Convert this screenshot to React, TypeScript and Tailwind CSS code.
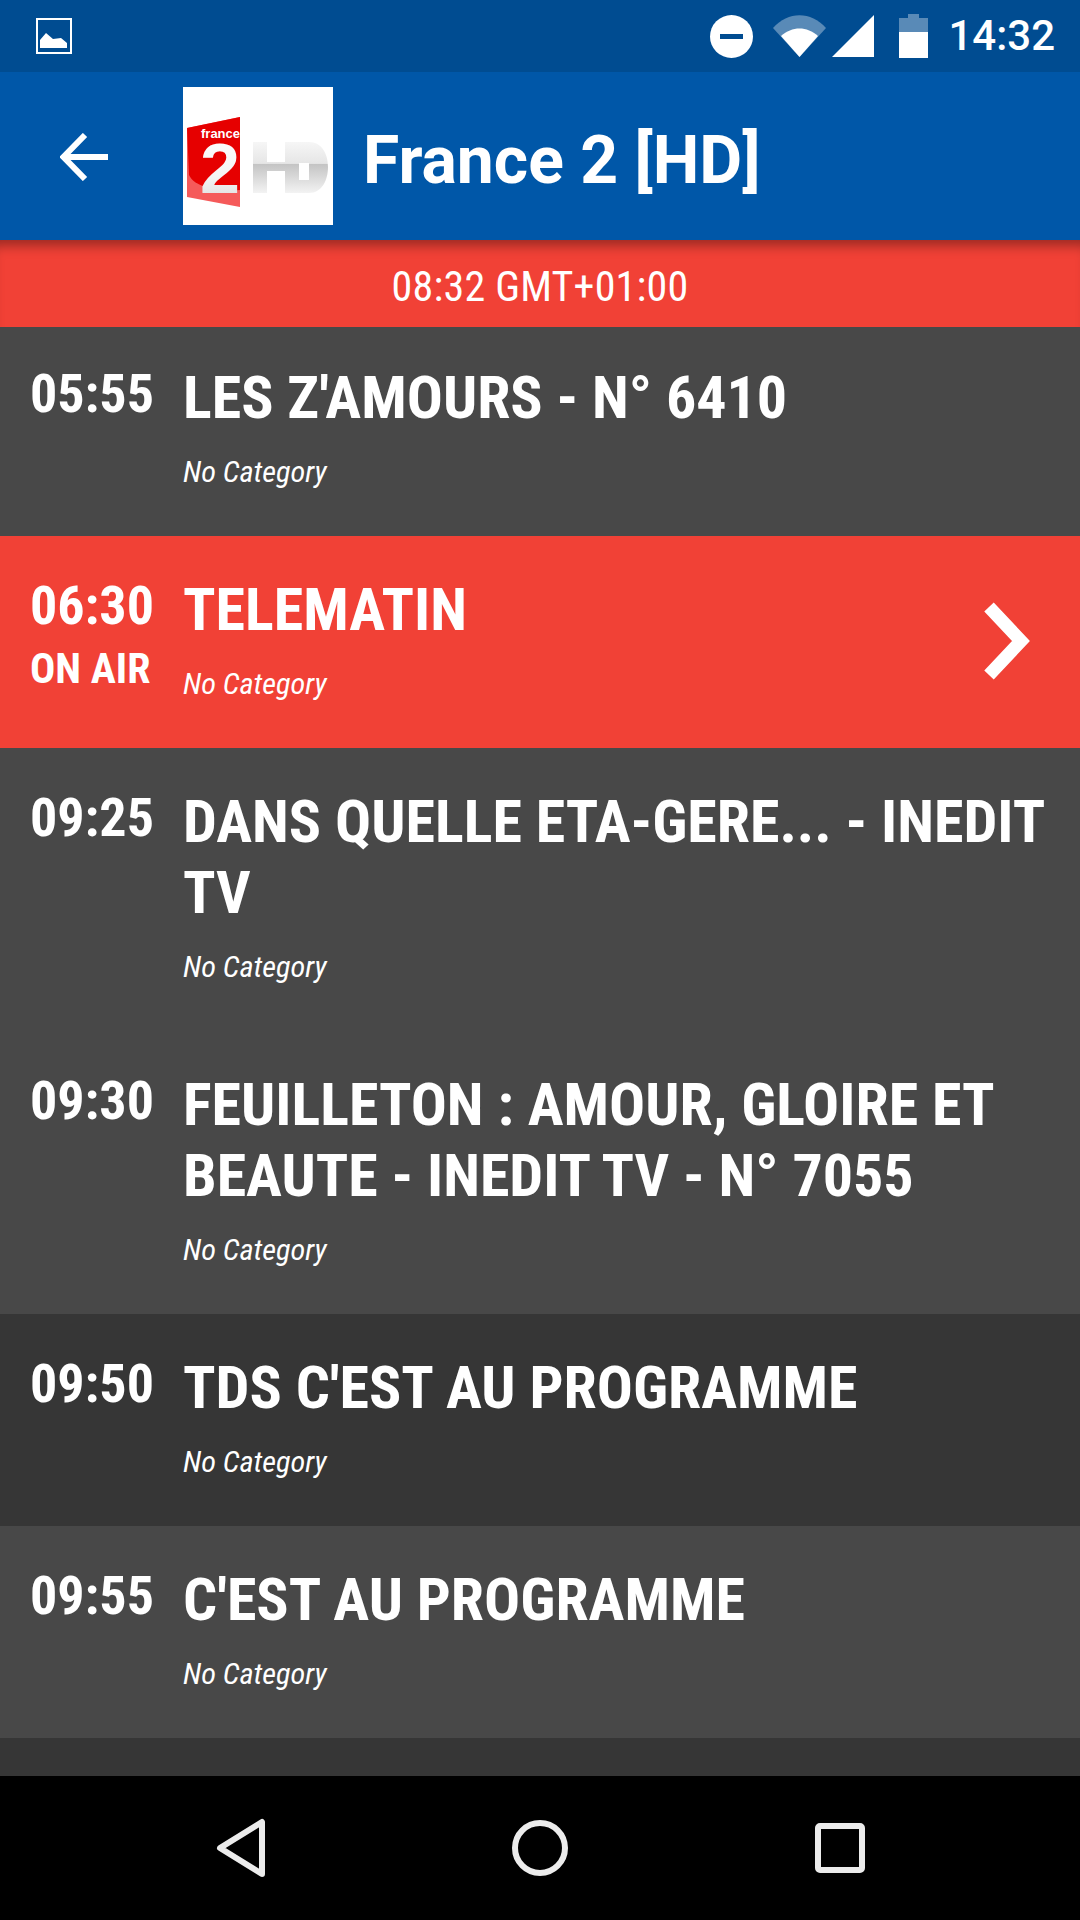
interface Program {
    time: string;
    title: string[];
    bg: string;
    onAir?: boolean;
}

const programs: Program[] = [
    { time: '05:55', title: ["LES Z'AMOURS - N° 6410"], bg: 'bg-[#484848] h-[209px] pt-[35px]' },
    { time: '06:30', title: ['TELEMATIN'], bg: 'bg-[#f14136] h-[212px] pt-[38px]', onAir: true },
    { time: '09:25', title: ['DANS QUELLE ETA-GERE... - INEDIT', 'TV'], bg: 'bg-[#484848] h-[283px] pt-[38px]' },
    { time: '09:30', title: ['FEUILLETON : AMOUR, GLOIRE ET', 'BEAUTE - INEDIT TV - N° 7055'], bg: 'bg-[#484848] h-[283px] pt-[38px]' },
    { time: '09:50', title: ["TDS C'EST AU PROGRAMME"], bg: 'bg-[#363636] h-[212px] pt-[38px]' },
    { time: '09:55', title: ["C'EST AU PROGRAMME"], bg: 'bg-[#484848] h-[212px] pt-[38px]' },
];

function StatusBar() {
    return (
        <div className="h-[72px] bg-[#004c91] flex items-center justify-between pl-[36px] pr-[25px] [font-stretch:100%]">
            <svg width="36" height="36" viewBox="0 0 36 36" className="-mt-[1px]">
                <rect x="1" y="1" width="34" height="34" fill="none" stroke="#fff" strokeWidth="2" />
                <path d="M4 30V22L10 15L17 21L25 20L31 25V30z" fill="#fff" />
            </svg>
            <div className="flex items-center">
                <svg width="43" height="43" viewBox="0 0 43 43" className="mr-[20px]">
                    <circle cx="21.5" cy="21.5" r="21.5" fill="#fff" />
                    <rect x="10" y="19" width="23" height="5" fill="#004c91" />
                </svg>
                <svg width="53" height="42" viewBox="0 0 53 42" className="mr-[6px]">
                    <path d="M0 13C15 -4 38 -4 53 13L26.5 42z" fill="#fff" fillOpacity="0.35" />
                    <path d="M8 21C19 11 34 11 45 21L26.5 42z" fill="#fff" />
                </svg>
                <svg width="42" height="42" viewBox="0 0 42 42" className="mr-[25px]">
                    <path d="M42 0V42H0z" fill="#fff" />
                </svg>
                <svg width="29" height="44" viewBox="0 0 29 44" className="mr-[20px]">
                    <path d="M9 0h11v4h9v14H0V4h9z" fill="#fff" fillOpacity="0.35" />
                    <path d="M0 18h29v26H0z" fill="#fff" />
                </svg>
                <span className="text-[42px] leading-none text-white font-medium">14:32</span>
            </div>
        </div>
    );
}

function Logo() {
    return (
        <div className="w-[150px] h-[138px] bg-white shrink-0">
            <svg width="150" height="138" viewBox="0 0 150 138">
                <defs>
                    <linearGradient id="hd" x1="0" y1="0" x2="0" y2="1">
                        <stop offset="0" stopColor="#f6f6f6" />
                        <stop offset="0.42" stopColor="#e6e6e6" />
                        <stop offset="0.44" stopColor="#c4c4c4" />
                        <stop offset="1" stopColor="#f3f3f3" />
                    </linearGradient>
                    <linearGradient id="two" x1="0" y1="0" x2="0" y2="1">
                        <stop offset="0" stopColor="#ffffff" />
                        <stop offset="0.6" stopColor="#f4f4f4" />
                        <stop offset="1" stopColor="#d8d8d8" />
                    </linearGradient>
                </defs>
                <path d="M4 41L57 30V120L4 110z" fill="#f55a5a" />
                <path d="M4 41L57 30V103C35 104 12 101 6 88z" fill="#e60000" />
                <text x="18" y="51" fontSize="13" fontWeight="700" fill="#fff" fontFamily="Liberation Sans, sans-serif">france</text>
                <text x="17" y="106" fontSize="71" fontWeight="700" fill="url(#two)" fontFamily="Liberation Sans, sans-serif" textLength="40" lengthAdjust="spacingAndGlyphs">2</text>
                <path d="M70 55h14v20h18V55h24c13 0 19 12 19 25s-6 26-19 26h-24V84H84v22H70z" fill="url(#hd)" />
                <rect x="116" y="76" width="10" height="17" fill="#ffffff" />
            </svg>
        </div>
    );
}

function Row({ program }: { program: Program }) {
    return (
        <div className={`relative flex pl-[30px] ${program.bg}`}>
            <div className="w-[153px] shrink-0 pt-[8px]">
                <div className="text-[54px] leading-[48px] font-[750] text-white">{program.time}</div>
                {program.onAir && <div className="text-[42px] leading-[46px] mt-[16px] font-[750] text-white">ON AIR</div>}
            </div>
            <div className="min-w-0">
                {program.title.map((line) => (
                    <div key={line} className="text-[60px] leading-[71px] font-[750] text-white whitespace-nowrap">{line}</div>
                ))}
                <div className="text-[30.3px] leading-[36px] italic text-white mt-[21px]">No Category</div>
            </div>
            {program.onAir && (
                <svg width="47" height="72" viewBox="0 0 47 72" className="absolute left-[983px] top-[69px] overflow-visible">
                    <path d="M6 2L38 36L6 70" fill="none" stroke="#fff" strokeWidth="13" />
                </svg>
            )}
        </div>
    );
}

export default function App() {
    return (
        <div className="relative w-[1080px] h-[1920px] overflow-hidden flex flex-col bg-[#363636] font-['Roboto',sans-serif] [font-stretch:75%]">
            <StatusBar />
            <div className="relative z-10 h-[168px] bg-[#0057a8] flex items-center [font-stretch:100%]">
                <svg width="48" height="48" viewBox="0 0 48 48" className="ml-[60px] shrink-0 mt-[1px]">
                    <path d="M48 24H5M25 2L3.500 24L25 46" fill="none" stroke="#fff" strokeWidth="6" />
                </svg>
                <div className="ml-[75px]"><Logo /></div>
                <h1 className="ml-[30px] mt-[9px] text-[66px] font-bold text-white leading-none">France 2 [HD]</h1>
            </div>
            <div className="h-[87px] pt-[5px] bg-[#f14136] flex items-center justify-center text-[42px] text-white tracking-[0.2px] shadow-[inset_0_14px_12px_-8px_rgba(0,0,0,0.35)]">08:32 GMT+01:00</div>
            {programs.map((program) => (
                <Row key={program.time} program={program} />
            ))}
            <div className="h-[38px] bg-[#363636]" />
            <div className="h-[144px] bg-black flex items-center justify-center gap-[240px]">
                <svg width="60" height="60" viewBox="0 0 60 60" className="-translate-x-[1px]">
                    <path d="M53 4V56L11 30z" fill="none" stroke="#ececec" strokeWidth="6" strokeLinejoin="round" />
                </svg>
                <svg width="60" height="60" viewBox="0 0 60 60">
                    <circle cx="30" cy="30" r="25" fill="none" stroke="#ececec" strokeWidth="6" />
                </svg>
                <svg width="60" height="60" viewBox="0 0 60 60">
                    <rect x="8" y="8" width="44" height="44" rx="2" fill="none" stroke="#ececec" strokeWidth="6" />
                </svg>
            </div>
        </div>
    );
}
